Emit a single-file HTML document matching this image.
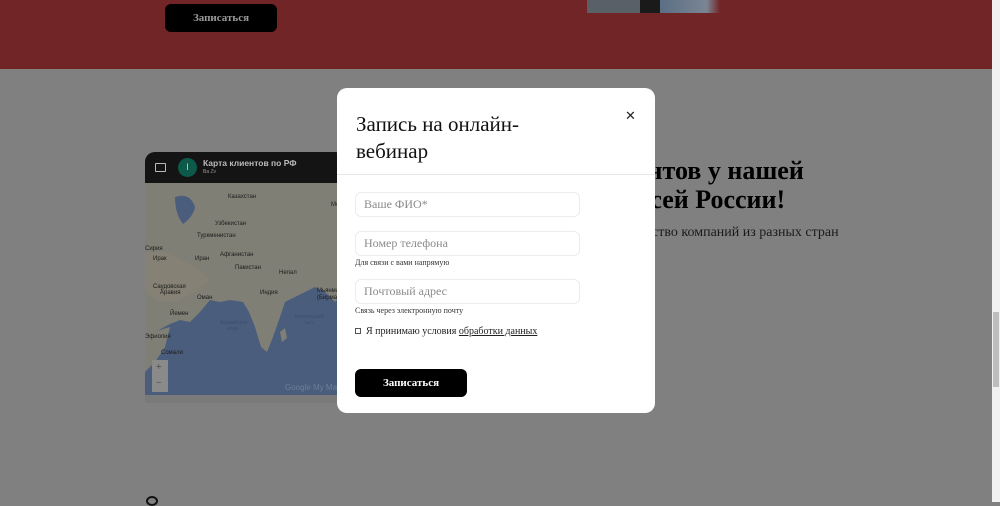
<!DOCTYPE html>
<html><head><meta charset="utf-8"><style>
*{margin:0;padding:0;box-sizing:border-box}
body{width:1000px;height:502px;overflow:hidden;background:#808080;font-family:"Liberation Serif",serif;position:relative}
.abs{position:absolute}
.red{left:0;top:0;width:992px;height:69px;background:#722526}
.btn1{left:165px;top:4px;width:112px;height:28px;background:#000;border-radius:6px;color:#9a9a9a;font-size:11px;font-weight:bold;text-align:center;line-height:28px}
.photo{left:587px;top:0;width:133px;height:13px;background:linear-gradient(90deg,#5a6068 0,#5a6068 40%,#1a1a1a 40%,#1a1a1a 55%,#5b6f85 55%,#7a8593 90%,#722526 100%)}
.h2{left:636px;top:156px;font-size:26px;line-height:29px;color:#000;font-weight:bold}
.p{left:636px;top:225px;font-size:14px;color:#1a1a1a}
.map{left:145px;top:152px;width:200px;height:251px;border-radius:10px 10px 0 0;overflow:hidden;background:#4a5d7c}
.mh{left:0;top:0;width:200px;height:31px;background:#141414}
.sb{left:992px;top:0;width:8px;height:502px;background:#f1f1f1}
.thumb{left:993px;top:312px;width:6px;height:75px;background:#bdbdbd}
.modal{left:337px;top:88px;width:318px;height:325px;background:#fff;border-radius:10px}
.title{left:19px;top:23px;font-size:21px;line-height:27px;color:#111}
.x{left:288px;top:20px;font-size:13px;color:#222}
.hr{left:0;top:86px;width:318px;height:1px;background:#e6e6e6}
.in{left:18px;width:225px;height:25px;border:1px solid #ececec;border-radius:6px;font-size:12px;color:#8a8a8a;padding-left:8px;line-height:23px}
.note{left:18px;font-size:8px;color:#333}
.cb{left:18px;top:240px;width:6px;height:6px;border:1px solid #555}
.btn2{left:18px;top:281px;width:112px;height:28px;background:#000;border-radius:6px;color:#fff;font-size:11px;font-weight:bold;text-align:center;line-height:28px}
</style></head><body>
<div class="abs red"></div>
<div class="abs btn1">Записаться</div>
<div class="abs photo"></div>
<div class="abs h2">ентов у нашей<br>всей России!</div>
<div class="abs p">жество компаний из разных стран</div>
<div class="abs map">
<svg width="200" height="251" style="position:absolute;left:0;top:0">
<path d="M0 31 H200 V140 L190 150 L180 140 L170 135 L160 140 L150 145 L140 150 L135 165 L128 185 L122 200 L116 195 L110 175 L104 160 L98 150 L85 148 L75 150 L65 148 L55 160 L45 170 L35 168 L25 172 L10 180 L0 182 Z" fill="#7f7f76"/>
<path d="M0 100 L20 100 L50 115 L65 128 L50 140 L30 150 L15 150 L0 140 Z" fill="#858174"/>
<path d="M0 182 L15 178 L25 175 L20 195 L10 210 L0 220Z" fill="#7f7f76"/>
<path d="M30 45 Q45 40 50 55 Q48 65 38 72 Q30 62 30 45Z" fill="#4a5d7c"/>
<path d="M135 180 L140 176 L142 186 L137 190Z" fill="#7f7f76"/>
<g font-family="Liberation Sans,sans-serif" font-size="6" fill="#1c1c1c">
<text x="83" y="46">Казахстан</text><text x="70" y="73">Узбекистан</text><text x="52" y="85">Туркменистан</text>
<text x="0" y="98">Сирия</text><text x="8" y="108">Ирак</text><text x="50" y="108">Иран</text><text x="75" y="104">Афганистан</text>
<text x="90" y="117">Пакистан</text><text x="134" y="122">Непал</text><text x="8" y="136">Саудовская</text><text x="15" y="142">Аравия</text>
<text x="52" y="147">Оман</text><text x="115" y="142">Индия</text><text x="172" y="140">Мьянма</text><text x="172" y="147">(Бирма)</text>
<text x="25" y="163">Йемен</text><text x="0" y="186">Эфиопия</text><text x="16" y="202">Сомали</text><text x="186" y="54">Мо</text></g>
<g font-family="Liberation Sans,sans-serif" font-size="5" fill="#3a4f70"><text x="75" y="172">Аравийское</text><text x="82" y="178">море</text><text x="150" y="166">Бенгальский</text><text x="160" y="172">зал.</text></g>
<rect x="7" y="208" width="16" height="32" fill="#8a8a8a"/>
<text x="11" y="218" font-size="10" fill="#444">+</text><text x="11" y="234" font-size="10" fill="#444">−</text>
<text x="140" y="238" font-size="8" fill="#6b7f9a" font-family="Liberation Sans,sans-serif">Google My Maps</text>
<rect x="0" y="243" width="200" height="8" fill="#7a7a7a"/>
</svg>
<div class="abs mh">
<div class="abs" style="left:10px;top:11px;width:11px;height:9px;border:1.5px solid #bbb;border-radius:1px"></div>
<div class="abs" style="left:33px;top:6px;width:19px;height:19px;border-radius:50%;background:#0d5a4a;color:#ccc;font-size:9px;text-align:center;line-height:19px;font-family:Liberation Sans,sans-serif">I</div>
<div class="abs" style="left:58px;top:6px;font-size:8.5px;color:#bbb;font-family:Liberation Sans,sans-serif;font-weight:bold">Карта клиентов по РФ</div>
<div class="abs" style="left:58px;top:17px;font-size:5px;color:#999;font-family:Liberation Sans,sans-serif">Ba Zv</div>
</div>
</div>
<div class="abs sb"></div><div class="abs thumb"></div>
<div class="abs modal">
<div class="abs title">Запись на онлайн-<br>вебинар</div>
<div class="abs x">✕</div>
<div class="abs hr"></div>
<div class="abs in" style="top:104px">Ваше ФИО*</div>
<div class="abs in" style="top:143px">Номер телефона</div>
<div class="abs note" style="top:170px">Для связи с вами напрямую</div>
<div class="abs in" style="top:191px">Почтовый адрес</div>
<div class="abs note" style="top:218px">Связь через электронную почту</div>
<div class="abs cb"></div>
<div class="abs" style="left:29px;top:238px;font-size:10px;color:#222">Я принимаю условия <u>обработки данных</u></div>
<div class="abs btn2">Записаться</div>
</div>
<div class="abs" style="left:146px;top:496px;width:12px;height:10px;border:2px solid #111;border-radius:50%"></div>
</body></html>
